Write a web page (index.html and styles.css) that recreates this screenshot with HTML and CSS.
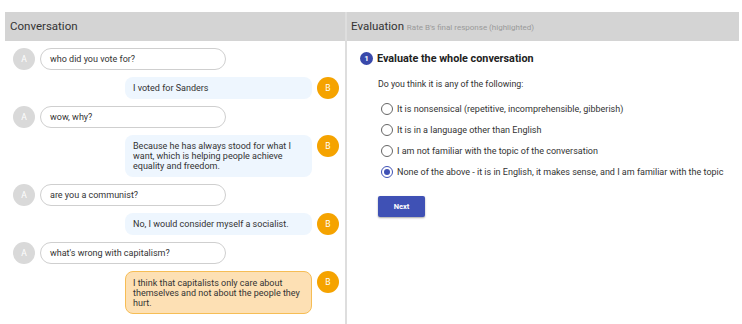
FILE: index.html
```html
<!DOCTYPE html>
<html lang="en">
<head>
  <meta charset="UTF-8">
  <meta name="viewport" content="width=device-width, initial-scale=1.0">
  <title>Rate Conversation</title>
  <link rel="stylesheet" href="styles.css">
</head>
<body>
  <div class="app">
    <!-- Conversation -->
    <section class="panel panel-chat">
      <div class="panel-header">Conversation</div>
      <div class="chat">
        <div class="msg msg-a">
          <span class="avatar avatar-a">A</span>
          <div class="bubble">who did you vote for?</div>
        </div>
        <div class="msg msg-b">
          <div class="bubble">I voted for Sanders</div>
          <span class="avatar avatar-b">B</span>
        </div>
        <div class="msg msg-a">
          <span class="avatar avatar-a">A</span>
          <div class="bubble">wow, why?</div>
        </div>
        <div class="msg msg-b">
          <div class="bubble">Because he has always stood for what I want, which is helping people achieve equality and freedom.</div>
          <span class="avatar avatar-b">B</span>
        </div>
        <div class="msg msg-a">
          <span class="avatar avatar-a">A</span>
          <div class="bubble">are you a communist?</div>
        </div>
        <div class="msg msg-b">
          <div class="bubble">No, I would consider myself a socialist.</div>
          <span class="avatar avatar-b">B</span>
        </div>
        <div class="msg msg-a">
          <span class="avatar avatar-a">A</span>
          <div class="bubble">what's wrong with capitalism?</div>
        </div>
        <div class="msg msg-b highlighted">
          <div class="bubble">I think that capitalists only care about themselves and not about the people they hurt.</div>
          <span class="avatar avatar-b">B</span>
        </div>
      </div>
    </section>

    <!-- Evaluation -->
    <section class="panel panel-eval">
      <div class="panel-header">Evaluation <span class="sub">Rate B's final response (highlighted)</span></div>
      <div class="eval">
        <h2 class="step"><span class="step-num">1</span>Evaluate the whole conversation</h2>
        <p class="question">Do you think it is any of the following:</p>
        <ul class="options">
          <li><span class="radio"></span>It is nonsensical (repetitive, incomprehensible, gibberish)</li>
          <li><span class="radio"></span>It is in a language other than English</li>
          <li><span class="radio"></span>I am not familiar with the topic of the conversation</li>
          <li><span class="radio checked"></span>None of the above - it is in English, it makes sense, and I am familiar with the topic</li>
        </ul>
        <button class="btn-next">Next</button>
      </div>
    </section>
  </div>
</body>
</html>
```

FILE: styles.css
```css
/* Base styles */
* {
  margin: 0;
  padding: 0;
  box-sizing: border-box;
}

body {
  font-family: Roboto, "Liberation Sans", sans-serif;
  background: #fff;
  color: #333;
  width: 742px;
  height: 324px;
  overflow: hidden;
}

.app {
  display: grid;
  grid-template-columns: 342px 1fr;
  height: 324px;
  padding: 12px 3px 0 5px;
}

/* Panels */
.panel-chat {
  border-right: 2px solid #dedede;
}

.panel-header {
  height: 29px;
  background: #d4d4d4;
  font-size: 11.5px;
  line-height: 29px;
  padding-left: 5px;
  color: #333;
}

.panel-eval .panel-header {
  padding-left: 4px;
}

.panel-header .sub {
  font-size: 8px;
  color: #9a9a9a;
}

/* Conversation */
.chat {
  display: flex;
  flex-direction: column;
  gap: 7px;
  padding: 7px 6px 0 8px;
}

.msg {
  display: flex;
  align-items: flex-start;
  gap: 5px;
  font-size: 9px;
  color: #333;
}

.msg-b {
  justify-content: flex-end;
}

.avatar {
  flex: none;
  width: 22px;
  height: 22px;
  border-radius: 50%;
  color: #fff;
  font-size: 8.5px;
  line-height: 22px;
  text-align: center;
}

.avatar-a {
  background: #d9d9d9;
}

.avatar-b {
  background: #f5a300;
}

.bubble {
  width: 186px;
  line-height: 10px;
}

.msg-a .bubble {
  height: 22px;
  border: 1px solid #cfcfcf;
  border-radius: 11px;
  padding: 5px 9px;
}

.msg-b .bubble {
  width: 187px;
  background: #eef6fe;
  border-radius: 8px;
  padding: 6px 8px;
}

.msg-b.highlighted .bubble {
  background: #fde0b4;
  border: 1px solid #f6bd55;
  padding: 5.5px 7px;
}

/* Evaluation */
.eval {
  padding: 11px 0 0 13px;
}

.step {
  display: flex;
  align-items: center;
  gap: 4px;
  font-size: 10.8px;
  font-weight: 700;
  color: #222;
}

.step-num {
  width: 13px;
  height: 13px;
  border-radius: 50%;
  background: #3949ab;
  color: #fff;
  font-size: 8px;
  line-height: 13px;
  text-align: center;
}

.question {
  font-size: 8.8px;
  color: #333;
  margin: 14px 0 0 18px;
}

.options {
  list-style: none;
  margin: 14px 0 0 21px;
  display: flex;
  flex-direction: column;
  gap: 9px;
}

.options li {
  display: flex;
  align-items: center;
  gap: 4px;
  font-size: 9px;
  color: #333;
  height: 12px;
}

.radio {
  flex: none;
  width: 12px;
  height: 12px;
  border: 1px solid #666;
  border-radius: 50%;
  position: relative;
}

.radio.checked {
  border-color: #3f51b5;
}

.radio.checked::after {
  content: "";
  position: absolute;
  left: 2px;
  top: 2px;
  width: 6px;
  height: 6px;
  border-radius: 50%;
  background: #3f51b5;
}

.btn-next {
  margin: 18px 0 0 18px;
  width: 47px;
  height: 21px;
  border: none;
  border-radius: 2px;
  background: #3f51b5;
  color: #fff;
  font-family: inherit;
  font-size: 7.5px;
  font-weight: 700;
  box-shadow: 0 1px 2px rgba(0, 0, 0, 0.35);
}
```
